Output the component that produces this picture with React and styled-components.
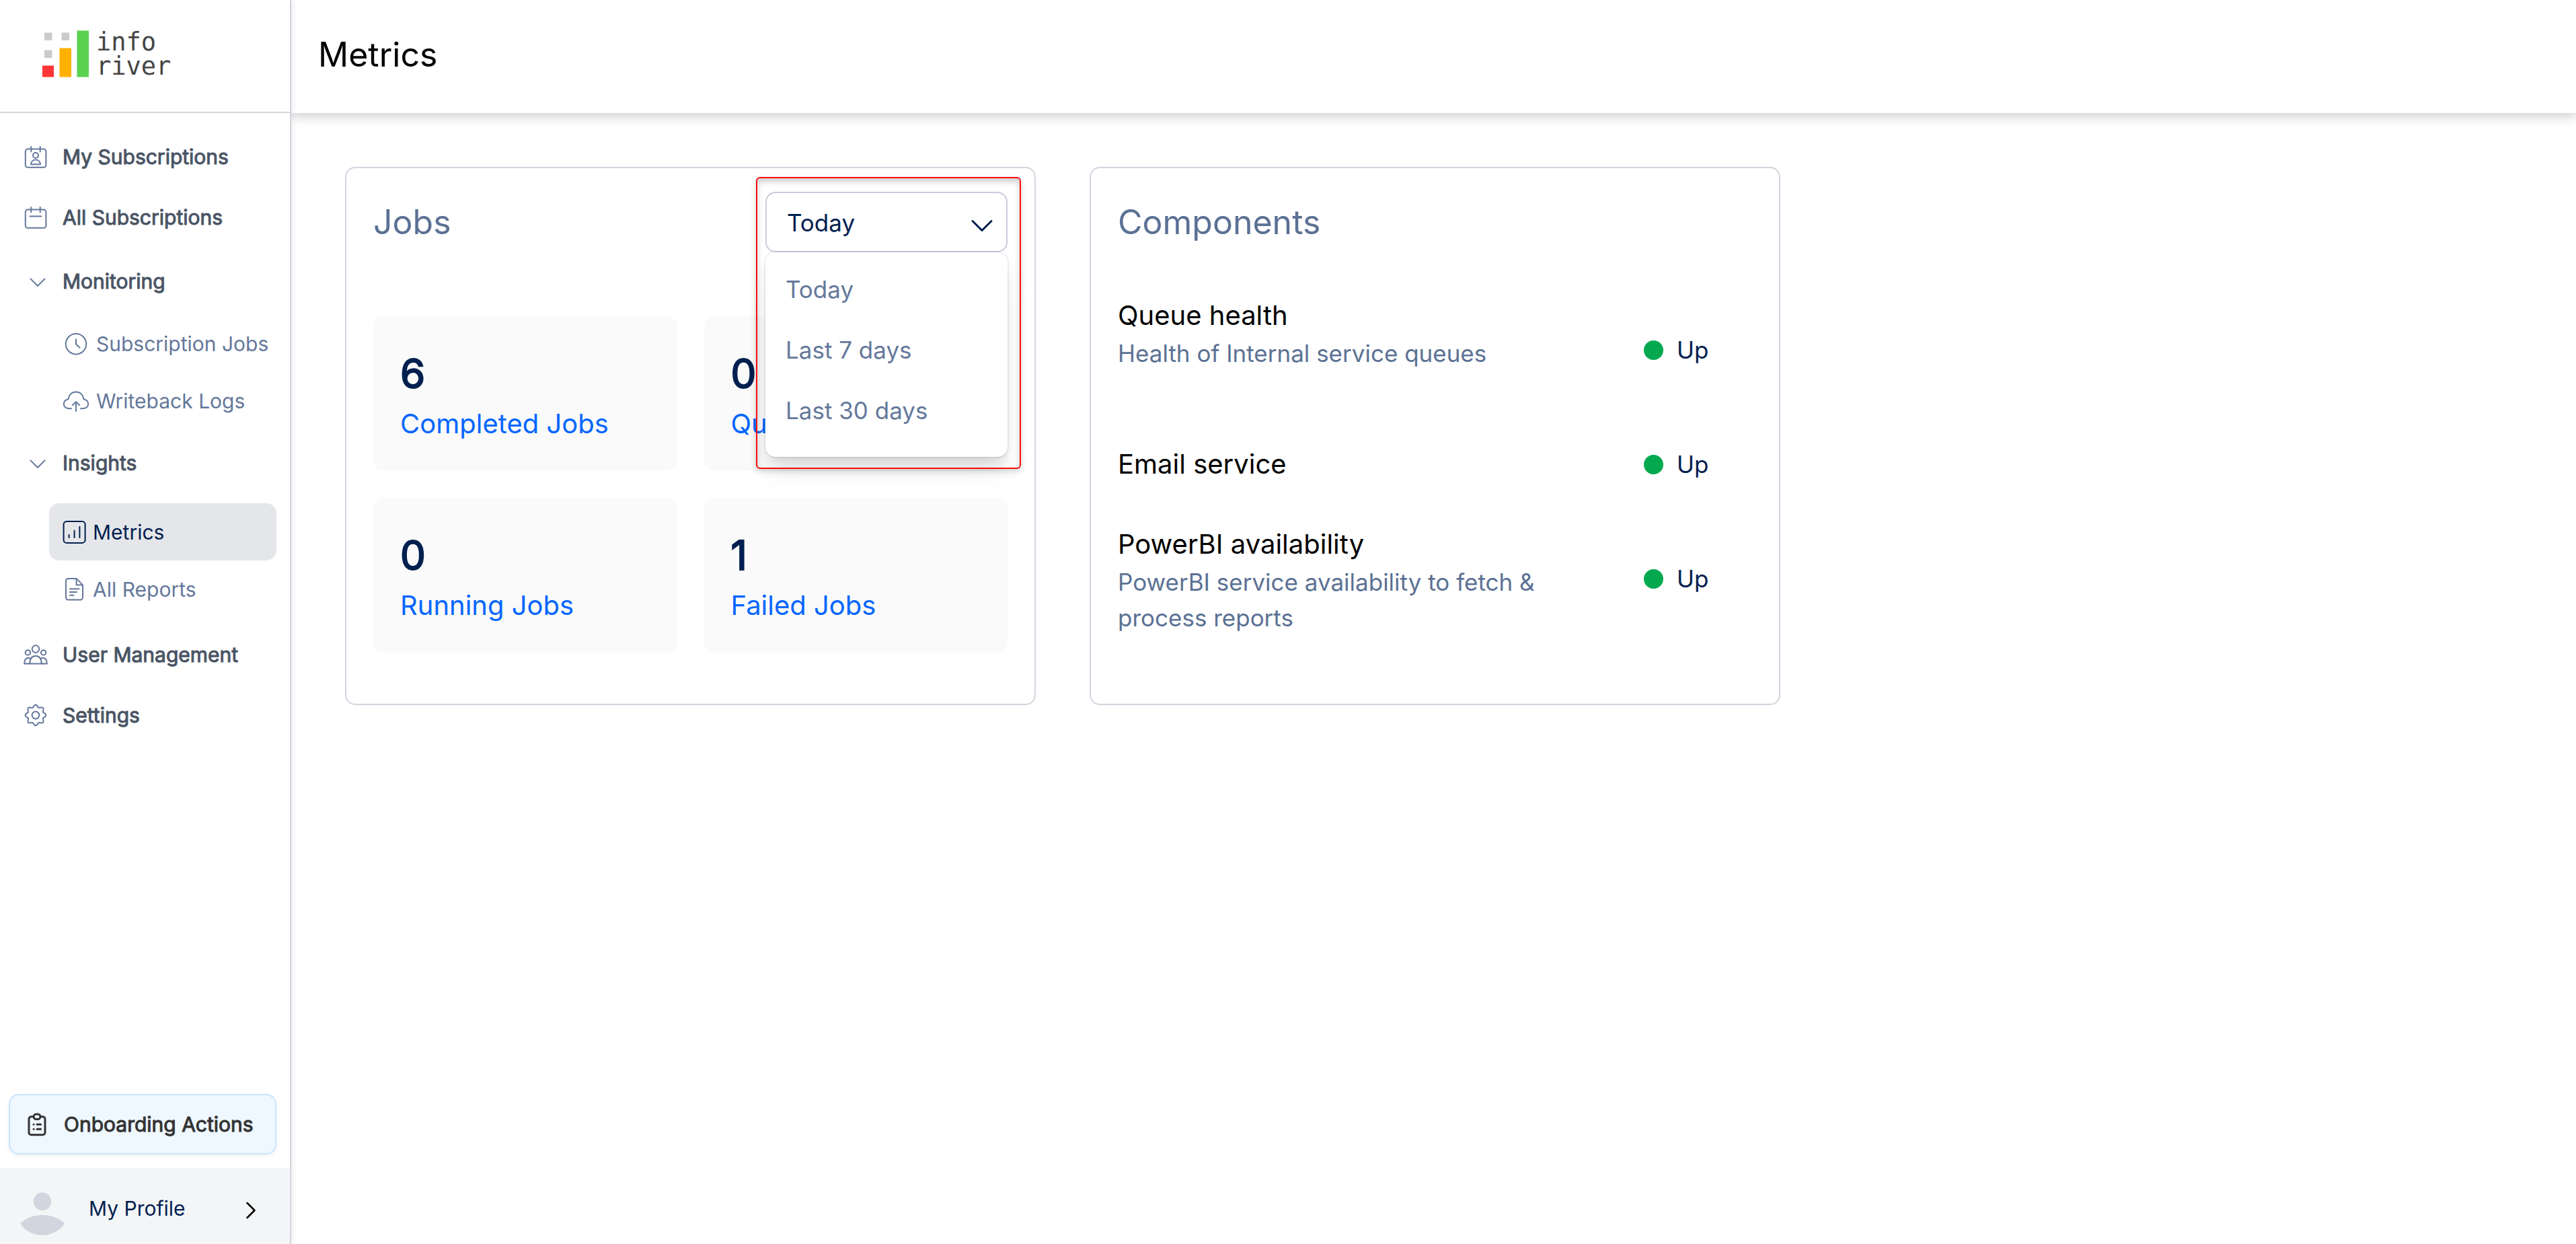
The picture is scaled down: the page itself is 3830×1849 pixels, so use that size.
import React, { useState } from "react";
import styled, { createGlobalStyle } from "styled-components";

const color = {
  navy: "#00204f",
  slate: "#5b7194",
  slateLight: "#64789b",
  nav: "#4a5565",
  line: "#d2d5de",
  blue: "#0566ff",
  green: "#04a94f",
};

const GlobalStyle = createGlobalStyle`
  *, *::before, *::after { box-sizing: border-box; }
  body {
    margin: 0;
    background: #ffffff;
    color: #000000;
    font-family: Inter, "Liberation Sans", sans-serif;
    font-size: 30px;
  }
  h1, h2, h3, p, ul, dl, dd { margin: 0; padding: 0; font-weight: 400; }
  ul { list-style: none; }
  a { color: inherit; text-decoration: none; }
  button, select { font: inherit; color: inherit; }
`;

/* ---------- Page shell ---------- */

const Page = styled.div`
  display: flex;
  min-height: 100vh;
`;

const Sidebar = styled.aside`
  display: flex;
  flex-direction: column;
  flex: 0 0 433px;
  min-width: 0;
  background: #ffffff;
  border-right: 2px solid ${color.line};
  box-shadow: 0 0 10px rgba(0, 0, 0, 0.12);
  z-index: 2;
`;

const Main = styled.main`
  flex: 1;
  min-width: 0;
`;

const TopBar = styled.header`
  display: flex;
  align-items: center;
  height: 168px;
  padding: 0 40px 6px;
  background: #ffffff;
  box-shadow: 0 4px 16px rgba(0, 0, 0, 0.22);
`;

const PageTitle = styled.h1`
  font-size: 50px;
  line-height: 60px;
`;

/* ---------- Sidebar ---------- */

const Brand = styled.div`
  height: 168px;
  padding: 45px 62px 0;
  border-bottom: 2px solid ${color.line};
`;

const BrandLink = styled.a`
  display: flex;
  gap: 10px;
`;

const BrandName = styled.span`
  color: #454545;
  font-family: "DejaVu Sans Mono", monospace;
  font-size: 37px;
  line-height: 36px;
`;

const NavList = styled.ul`
  padding-top: 20px;
`;

const NavGroup = styled.li`
  padding-top: 5px;
`;

const NavRow = styled.a`
  display: flex;
  align-items: center;
  gap: 20px;
  width: 100%;
  height: 90px;
  padding: 0 33px;
  border: 0;
  background: none;
  color: ${color.nav};
  font-size: 30px;
  text-align: left;
  -webkit-text-stroke: 1px currentColor;
  cursor: pointer;
  svg { color: ${color.slateLight}; }
`;

const SubList = styled.ul`
  padding: ${(p) => (p.$roomy ? "15px 20px 10px 73px" : "5px 20px 0 73px")};
`;

const SubRow = styled.a`
  display: flex;
  align-items: center;
  gap: 10px;
  height: 85px;
  padding-left: 20px;
  border-radius: 15px;
  background: ${(p) => (p.$active ? "#e5e6ea" : "transparent")};
  color: ${(p) => (p.$active ? color.navy : color.slateLight)};
  white-space: nowrap;
`;

const SidebarFooter = styled.div`
  margin-top: auto;
`;

const OnboardingButton = styled.button`
  display: flex;
  align-items: center;
  gap: 20px;
  width: calc(100% - 33px);
  height: 90px;
  margin: 0 20px 20px 13px;
  padding: 0 20px;
  border: 2px solid #cbe5ff;
  border-radius: 15px;
  background: #eff7ff;
  box-shadow: 0 2px 6px rgba(0, 0, 0, 0.06);
  color: #333333;
  white-space: nowrap;
  -webkit-text-stroke: 1px currentColor;
  cursor: pointer;
`;

const ProfileButton = styled.button`
  display: flex;
  align-items: center;
  width: 100%;
  height: 113px;
  padding: 7px 45px 0 28px;
  border: 0;
  background: #f4f5f7;
  color: ${color.navy};
  text-align: left;
  cursor: pointer;
`;

const ProfileName = styled.span`
  flex: 1;
  padding-left: 34px;
`;

/* ---------- Cards ---------- */

const CardGrid = styled.div`
  display: grid;
  grid-template-columns: repeat(3, 1fr);
  gap: 80px;
  padding: 80px 76px 80px 80px;
`;

const Card = styled.section`
  padding: 35px 40px 76px;
  border: 2px solid ${color.line};
  border-radius: 15px;
`;

const CardHead = styled.div`
  display: flex;
  align-items: center;
  justify-content: space-between;
  height: 90px;
`;

const CardTitle = styled.h2`
  color: ${color.slate};
  font-size: 50px;
  line-height: 60px;
`;

const TileGrid = styled.div`
  display: grid;
  grid-template-columns: 1fr 1fr;
  gap: 40px;
  margin-top: 95px;
`;

const Tile = styled.div`
  padding: 40px;
  border-radius: 15px;
  background: #fafafa;
`;

const TileValue = styled.p`
  color: ${color.navy};
  font-size: 60px;
  line-height: 90px;
  -webkit-text-stroke: 2px currentColor;
`;

const TileLabel = styled.a`
  display: block;
  color: ${color.blue};
  font-size: 40px;
  line-height: 60px;
  white-space: nowrap;
`;

/* ---------- Period picker ---------- */

const Picker = styled.div`
  position: relative;
  width: 360px;
`;

const PickerSelect = styled.select`
  display: block;
  appearance: none;
  width: 100%;
  height: 90px;
  padding: 2px 80px 0 30px;
  border: 2px solid #c8cddb;
  border-radius: 15px;
  background: #ffffff;
  color: ${color.navy};
  font-size: 35px;
`;

const PickerArrow = styled.svg`
  position: absolute;
  top: 25px;
  right: 18px;
  pointer-events: none;
`;

const PickerMenu = styled.ul`
  position: absolute;
  top: 90px;
  left: 0;
  right: 0;
  z-index: 1;
  padding: 10px 0 24px;
  border-radius: 15px;
  background: #ffffff;
  box-shadow:
    0 0 0 2px rgba(0, 0, 0, 0.05),
    0 25px 38px -8px rgba(0, 0, 0, 0.1),
    0 10px 15px -5px rgba(0, 0, 0, 0.1);
`;

const PickerOption = styled.button`
  display: block;
  width: 100%;
  height: 90px;
  padding: 0 30px;
  border: 0;
  background: none;
  color: ${color.slateLight};
  font-size: 35px;
  text-align: left;
  cursor: pointer;
`;

const Callout = styled.div`
  position: absolute;
  top: -22px;
  left: -14px;
  right: -20px;
  height: 434px;
  z-index: 2;
  border: 2px solid #fb0d0d;
  border-radius: 6px;
  box-shadow:
    0 4px 10px rgba(0, 0, 0, 0.16),
    inset 0 5px 8px rgba(0, 0, 0, 0.2);
  pointer-events: none;
`;

/* ---------- Component health ---------- */

const HealthList = styled.ul`
  margin-top: 60px;
`;

const HealthRow = styled.li`
  display: grid;
  grid-template-columns: 1fr 161px;
  column-gap: 60px;
  align-items: center;
  min-height: 170px;
`;

const HealthText = styled.div`
  padding-top: ${(p) => (p.$detailed ? "4px" : "0")};
`;

const HealthName = styled.h3`
  font-size: 40px;
  line-height: 60px;
`;

const HealthNote = styled.p`
  min-height: 106px;
  color: ${color.slate};
  font-size: 35px;
  line-height: 53px;
`;

const Status = styled.span`
  display: flex;
  align-items: center;
  gap: 20px;
  color: ${color.navy};
  font-size: 35px;
`;

const StatusDot = styled.span`
  width: 29px;
  height: 29px;
  border-radius: 50%;
  background: ${color.green};
`;

/* ---------- Icons ---------- */

const Icon = styled.svg.attrs((p) => ({
  width: p.$size || 40,
  height: p.$size || 40,
  viewBox: `0 0 ${p.$size || 40} ${p.$size || 40}`,
  fill: "none",
  stroke: "currentColor",
  strokeWidth: p.$weight || 2,
  strokeLinecap: "round",
  strokeLinejoin: "round",
  "aria-hidden": true,
}))`
  flex: none;
`;

const LogoMark = () => (
  <svg width="71" height="71" viewBox="0 0 71 71" aria-hidden="true">
    <g fill="#cbcbcb">
      <rect x="4" y="3.5" width="11.5" height="11.5" />
      <rect x="29.5" y="3.5" width="11.5" height="11.5" />
      <rect x="4" y="29.5" width="11.5" height="11.5" />
    </g>
    <rect x="1" y="52.5" width="17" height="17" fill="#ff3636" />
    <rect x="26.5" y="26.5" width="17.5" height="43" fill="#ffb000" />
    <rect x="52.5" y="0.5" width="17.5" height="69" fill="#5ad250" />
  </svg>
);

const CalendarFrame = () => (
  <>
    <rect x="4.8" y="8.6" width="30.6" height="27.2" rx="3.5" />
    <path d="M13.3 5v7.5M26.7 5v7.5" />
  </>
);

const CalendarPersonIcon = () => (
  <Icon>
    <CalendarFrame />
    <circle cx="20" cy="18" r="4" />
    <path d="M13 31.2c0-4 3-6.6 7-6.6s7 2.6 7 6.6z" />
  </Icon>
);

const CalendarIcon = () => (
  <Icon>
    <CalendarFrame />
    <path d="M11.5 18.4h17" />
  </Icon>
);

const ChevronIcon = () => (
  <Icon>
    <path d="M12.4 16.4 23 27l10.6-10.6" />
  </Icon>
);

const ClockIcon = () => (
  <Icon>
    <circle cx="20" cy="20.2" r="15.2" />
    <path d="M20 13.2v7.3l5.5 5.3" />
  </Icon>
);

const CloudUploadIcon = () => (
  <Icon>
    <path d="M13.2 31.3H10C5 31.3 1.8 28.2 1.8 24.5c0-3.6 2.7-6.3 6.7-7.2C9.5 10.5 14 6.4 20 6.4s10.5 4.1 11.5 10.9c4 .9 6.700 3.600 6.700 7.200 0 3.700-3.200 6.800-8.200 6.800h-3.200" />
    <path d="M20 35V21.3M14.8 26.3l5.2-5.2 5.2 5.2" />
  </Icon>
);

const ChartIcon = () => (
  <Icon $size={35}>
    <rect x="1.6" y="1.9" width="32" height="32" rx="4.5" />
    <path d="M9.6 22v4M17.6 15.8V26M25.4 10v16" />
  </Icon>
);

const ReportIcon = () => (
  <Icon $size={35}>
    <path d="M20.6 1.9H8.2a3.2 3.2 0 0 0-3.2 3.2v25.2a3.2 3.2 0 0 0 3.2 3.2h18.6a3.2 3.2 0 0 0 3.2-3.2V11.4zV11.4H30" />
    <path d="M11 17.2h13.5M11 22h10M11 26.7h5.5" />
  </Icon>
);

const UsersIcon = () => (
  <Icon>
    <circle cx="20" cy="11.6" r="5.3" />
    <circle cx="8.4" cy="16.9" r="3.7" />
    <circle cx="31.6" cy="16.9" r="3.7" />
    <path d="M11.3 33.6c0-7.4 3.2-11.6 8.7-11.6s8.7 4.2 8.7 11.6z" />
    <path d="M11.3 33.6H3.2c0-6 1.8-8.6 5.8-8.6 1.5 0 2.7.3 3.7 1M28.7 33.6h8.1c0-6-1.8-8.6-5.8-8.6-1.5 0-2.7.3-3.7 1" />
  </Icon>
);

const GEAR_PATH =
  Array.from({ length: 120 }, (_, i) => {
    const a = (i / 120) * Math.PI * 2;
    const r = 13.7 + 1.7 * Math.cos(8 * a);
    const x = (20 + r * Math.cos(a)).toFixed(2);
    const y = (20 + r * Math.sin(a)).toFixed(2);
    return `${i ? "L" : "M"}${x} ${y}`;
  }).join("") + "Z";

const GearIcon = () => (
  <Icon>
    <path d={GEAR_PATH} />
    <circle cx="20" cy="20" r="5.4" />
  </Icon>
);

const ClipboardIcon = () => (
  <Icon $weight={3}>
    <path d="M14 8.8h-2.5a3.5 3.5 0 0 0-3.5 3.5v20a3.5 3.5 0 0 0 3.5 3.5h17a3.5 3.5 0 0 0 3.5-3.5v-20a3.5 3.5 0 0 0-3.5-3.5H26" />
    <rect x="15" y="5" width="10" height="7.4" rx="3.7" />
    <path d="M15 20.2h.1M20 20.2h5.6M15 27.2h.1M20 27.2h5.6" />
  </Icon>
);

const AvatarIcon = () => (
  <svg width="70" height="80" viewBox="0 0 70 80" fill="#d2d5dd" aria-hidden="true">
    <circle cx="35" cy="29.8" r="13.3" />
    <path d="M2 62.5C10 54.5 21.5 50 35 50s25 4.5 33 12.5C60.5 73.5 48.5 80 35 80S9.5 73.5 2 62.5z" />
  </svg>
);

const ProfileArrow = () => (
  <svg width="24" height="40" viewBox="0 0 24 40" fill="none" stroke="#000000" strokeWidth="2.5" strokeLinecap="round" strokeLinejoin="round" aria-hidden="true">
    <path d="M5.5 12 16.5 23 5.5 34" />
  </svg>
);

/* ---------- Data ---------- */

const MONITORING = [
  { label: "Subscription Jobs", Glyph: ClockIcon },
  { label: "Writeback Logs", Glyph: CloudUploadIcon },
];

const INSIGHTS = [
  { label: "Metrics", Glyph: ChartIcon, active: true },
  { label: "All Reports", Glyph: ReportIcon },
];

const JOBS = [
  { value: 6, label: "Completed Jobs" },
  { value: 0, label: "Queued Jobs" },
  { value: 0, label: "Running Jobs" },
  { value: 1, label: "Failed Jobs" },
];

const PERIODS = ["Today", "Last 7 days", "Last 30 days"];

const COMPONENTS = [
  { name: "Queue health", note: "Health of Internal service queues", status: "Up" },
  { name: "Email service", status: "Up" },
  {
    name: "PowerBI availability",
    note: "PowerBI service availability to fetch & process reports",
    status: "Up",
  },
];

/* ---------- Parts ---------- */

const NavItem = ({ label, Glyph }) => (
  <li>
    <NavRow href="#">
      <Glyph />
      {label}
    </NavRow>
  </li>
);

const NavSection = ({ label, items, roomy }) => {
  const [open, setOpen] = useState(true);
  return (
    <NavGroup>
      <NavRow as="button" type="button" aria-expanded={open} onClick={() => setOpen(!open)}>
        <ChevronIcon />
        {label}
      </NavRow>
      {open && (
        <SubList $roomy={roomy}>
          {items.map(({ label: text, Glyph, active }) => (
            <li key={text}>
              <SubRow href="#" $active={active} aria-current={active ? "page" : undefined}>
                <Glyph />
                {text}
              </SubRow>
            </li>
          ))}
        </SubList>
      )}
    </NavGroup>
  );
};

const PeriodPicker = () => {
  const [period, setPeriod] = useState(PERIODS[0]);
  return (
    <Picker>
      <PickerSelect
        id="period"
        aria-label="Period"
        value={period}
        onChange={(e) => setPeriod(e.target.value)}
      >
        {PERIODS.map((p) => (
          <option key={p}>{p}</option>
        ))}
      </PickerSelect>
      <PickerArrow width="40" height="40" viewBox="0 0 40 40" fill="none" stroke={color.navy} strokeWidth="3" strokeLinecap="round" strokeLinejoin="round" aria-hidden="true">
        <path d="M6 18.5 20 32.5 34 18.5" />
      </PickerArrow>
      <PickerMenu>
        {PERIODS.map((p) => (
          <li key={p}>
            <PickerOption type="button" onClick={() => setPeriod(p)}>
              {p}
            </PickerOption>
          </li>
        ))}
      </PickerMenu>
      <Callout />
    </Picker>
  );
};

export default function App() {
  return (
    <>
      <GlobalStyle />
      <Page>
        <Sidebar>
          <Brand>
            <BrandLink href="#">
              <LogoMark />
              <BrandName>
                info
                <br />
                river
              </BrandName>
            </BrandLink>
          </Brand>
          <nav>
            <NavList>
              <NavItem label="My Subscriptions" Glyph={CalendarPersonIcon} />
              <NavItem label="All Subscriptions" Glyph={CalendarIcon} />
              <NavSection label="Monitoring" items={MONITORING} />
              <NavSection label="Insights" items={INSIGHTS} roomy />
              <NavItem label="User Management" Glyph={UsersIcon} />
              <NavItem label="Settings" Glyph={GearIcon} />
            </NavList>
          </nav>
          <SidebarFooter>
            <OnboardingButton type="button">
              <ClipboardIcon />
              Onboarding Actions
            </OnboardingButton>
            <ProfileButton type="button">
              <AvatarIcon />
              <ProfileName>My Profile</ProfileName>
              <ProfileArrow />
            </ProfileButton>
          </SidebarFooter>
        </Sidebar>

        <Main>
          <TopBar>
            <PageTitle>Metrics</PageTitle>
          </TopBar>
          <CardGrid>
            <Card>
              <CardHead>
                <CardTitle>Jobs</CardTitle>
                <PeriodPicker />
              </CardHead>
              <TileGrid>
                {JOBS.map(({ value, label }) => (
                  <Tile key={label}>
                    <TileValue>{value}</TileValue>
                    <TileLabel href="#">{label}</TileLabel>
                  </Tile>
                ))}
              </TileGrid>
            </Card>

            <Card>
              <CardHead>
                <CardTitle>Components</CardTitle>
              </CardHead>
              <HealthList>
                {COMPONENTS.map(({ name, note, status }) => (
                  <HealthRow key={name}>
                    <HealthText $detailed={Boolean(note)}>
                      <HealthName>{name}</HealthName>
                      {note && <HealthNote>{note}</HealthNote>}
                    </HealthText>
                    <Status>
                      <StatusDot />
                      {status}
                    </Status>
                  </HealthRow>
                ))}
              </HealthList>
            </Card>
          </CardGrid>
        </Main>
      </Page>
    </>
  );
}
